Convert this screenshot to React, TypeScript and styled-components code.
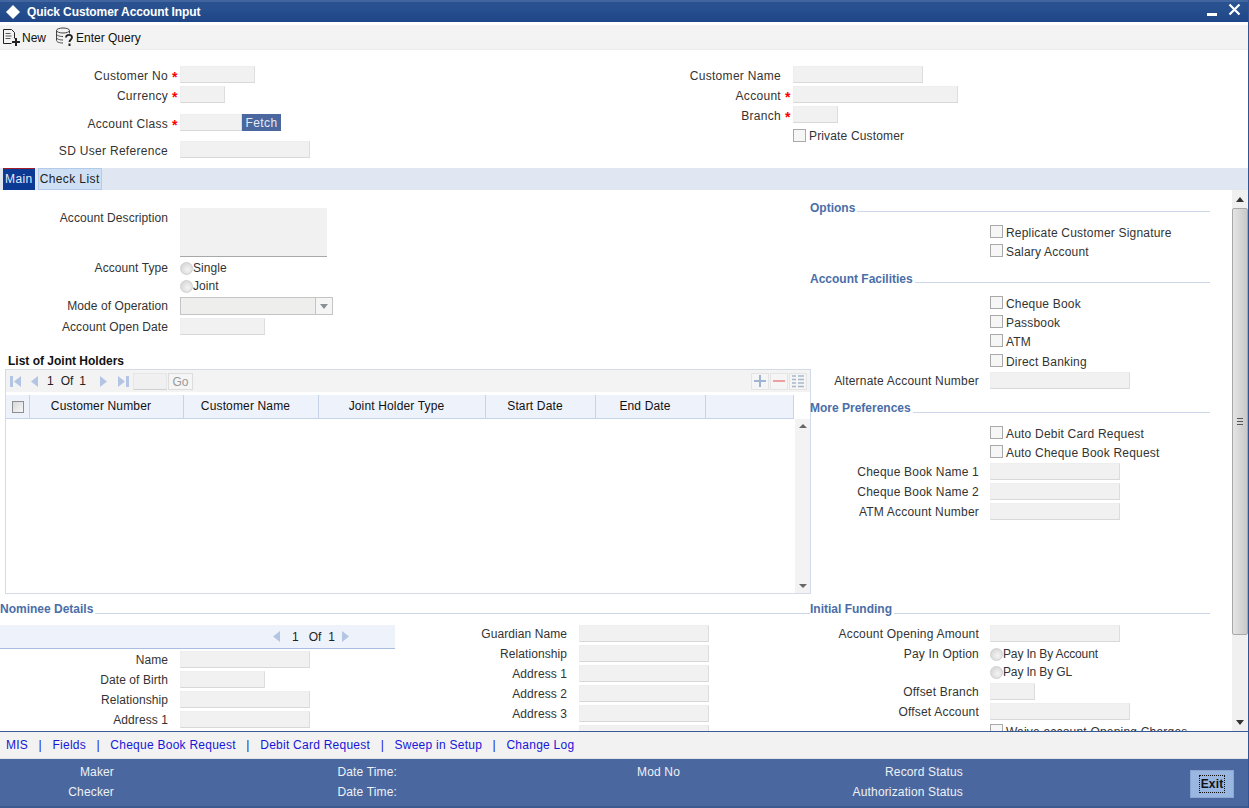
import React from 'react'
import styled, { createGlobalStyle } from 'styled-components'

const GlobalStyle = createGlobalStyle`
  html, body {
    margin: 0;
    padding: 0;
    background: #fff;
    overflow: hidden;
  }

  body {
    font-family: "Liberation Sans", Arial, sans-serif;
    font-size: 12px;
    color: #333;
  }
`

const RowField = ({
  label,
  width,
  labelWidth = 168,
  starWidth = 12,
  top = 3,
  required = false
}: {
  label: string
  width: number
  labelWidth?: number
  starWidth?: number
  top?: number
  required?: boolean
}) => (
  <Field $top={top}>
    <Label $width={labelWidth}>{label}</Label>
    <Star $width={starWidth}>{required ? '*' : ''}</Star>
    <TextInput $width={width} />
  </Field>
)

const SideField = ({ label, width, top }: { label: string; width: number; top?: number }) => (
  <RowField label={label} width={width} labelWidth={169} starWidth={11} top={top} />
)

const CheckRow = ({ label, top = 0 }: { label: string; top?: number }) => (
  <OptionRow $top={top}>
    <Box />
    <span>{label}</span>
  </OptionRow>
)

const SectionHeading = ({
  title,
  top,
  lineGap = 3
}: {
  title: string
  top: number
  lineGap?: number
}) => (
  <Heading $top={top}>
    <span>{title}</span>
    <HeadingLine $gap={lineGap} />
  </Heading>
)

const Arrow = ({ dir, left = 0 }: { dir: 'left' | 'right'; left?: number }) => (
  <PagerIcon $left={left}>
    <svg width="8" height="11" viewBox="0 0 8 11">
      <path d={dir === 'left' ? 'M7 0v11L0 5.500z' : 'M1 0v11l7-5.500z'} fill="#b4c5e3" />
    </svg>
  </PagerIcon>
)

const EdgeArrow = ({ dir, left = 0 }: { dir: 'left' | 'right'; left?: number }) => (
  <PagerIcon $left={left}>
    <svg width="11" height="11" viewBox="0 0 11 11">
      {dir === 'left' ? (
        <path d="M0 0h3v11H0zM11 0v11L4 5.500z" fill="#b4c5e3" />
      ) : (
        <path d="M8 0h3v11H8zM0 0v11l7-5.500z" fill="#b4c5e3" />
      )}
    </svg>
  </PagerIcon>
)

const App = () => {
  const columns = [
    { title: 'Customer Number', width: 154 },
    { title: 'Customer Name', width: 135 },
    { title: 'Joint Holder Type', width: 167 },
    { title: 'Start Date', width: 110 },
    { title: 'End Date', width: 110 }
  ]

  return (
    <Window>
      <GlobalStyle />

      <TitleBar>
        <svg width="16" height="16" viewBox="0 0 16 16">
          <path d="M8 1l7 7-7 7-7-7z" fill="#fff" />
        </svg>
        <TitleText>Quick Customer Account Input</TitleText>
        <WindowControls>
          <svg width="10" height="4" viewBox="0 0 10 4">
            <rect width="10" height="3" y="1" fill="#fff" />
          </svg>
          <svg width="13" height="13" viewBox="0 0 13 13">
            <path d="M1.500 1.500l10 10M11.500 1.500l-10 10" stroke="#fff" strokeWidth="2.200" />
          </svg>
        </WindowControls>
      </TitleBar>

      <Toolbar>
        <ToolButton>
          <svg width="20" height="20" viewBox="0 0 20 20" fill="none" stroke="#222">
            <path d="M2.500 2.500h8l3 3v6M2.500 2.500v14h8" />
            <path d="M4.500 6.500h5M4.500 9h6M4.500 11.500h5" stroke="#555" />
            <path d="M15 11v8M11 15h8" strokeWidth="2" />
          </svg>
          <span>New</span>
        </ToolButton>
        <ToolButton>
          <svg width="20" height="20" viewBox="0 0 20 20" fill="none" stroke="#444">
            <ellipse cx="8" cy="3.500" rx="6.500" ry="2.500" />
            <path d="M1.500 3.500v10c0 1.400 3 2.500 6.500 2.500M14.500 3.500v3M1.500 7c0 1.400 3 2.500 6.500 2.500M1.500 10.500C1.500 12 4.500 13 8 13" />
            <path d="M11 10.500c0-3.500 6-3.500 6 0 0 2-2.500 2-2.500 4.500" strokeWidth="1.800" stroke="#222" />
            <path d="M14.500 16.500v2.500" strokeWidth="2" stroke="#222" />
          </svg>
          <span>Enter Query</span>
        </ToolButton>
      </Toolbar>

      <HeaderForm>
        <HeaderColumn $width={500}>
          <RowField label="Customer No" width={75} required top={16} />
          <RowField label="Currency" width={45} required />
          <Field $top={11}>
            <Label $width={168}>Account Class</Label>
            <Star>*</Star>
            <TextInput $width={62} />
            <FetchButton>Fetch</FetchButton>
          </Field>
          <RowField label="SD User Reference" width={130} top={10} />
        </HeaderColumn>
        <HeaderColumn $width={600}>
          <RowField label="Customer Name" width={130} labelWidth={281} top={16} />
          <RowField label="Account" width={165} labelWidth={281} required />
          <RowField label="Branch" width={45} labelWidth={281} required />
          <HeaderCheck>
            <Box />
            <span>Private Customer</span>
          </HeaderCheck>
        </HeaderColumn>
      </HeaderForm>

      <TabBand>
        <Tab $active>Main</Tab>
        <Tab>Check List</Tab>
      </TabBand>

      <Body>
        <BodyContent>
          <LeftColumn>
            <Field $top={18} $height={49}>
              <TopLabel $width={168}>Account Description</TopLabel>
              <Star />
              <TextArea />
            </Field>
            <RadioField $top={2}>
              <Label $width={168}>Account Type</Label>
              <Star />
              <Radio />
              <span>Single</span>
            </RadioField>
            <RadioField>
              <Label $width={168} />
              <Star />
              <Radio />
              <span>Joint</span>
            </RadioField>
            <Field $top={2} $height={18}>
              <Label $width={168}>Mode of Operation</Label>
              <Star />
              <SelectBox>
                <SelectHandle>
                  <svg width="8" height="5" viewBox="0 0 8 5">
                    <path d="M0 0h8L4 5z" fill="#8a9099" />
                  </svg>
                </SelectHandle>
              </SelectBox>
            </Field>
            <RowField label="Account Open Date" width={85} />

            <GridTitle>List of Joint Holders</GridTitle>
            <GridPanel>
              <GridToolbar>
                <EdgeArrow dir="left" left={4} />
                <Arrow dir="left" left={10} />
                <PageText $left={8}>1</PageText>
                <PageText $left={7}>Of</PageText>
                <PageText $left={6}>1</PageText>
                <Arrow dir="right" left={13} />
                <EdgeArrow dir="right" left={11} />
                <GoInput />
                <GoButton>Go</GoButton>
                <GridActions>
                  <ActionButton>
                    <svg width="14" height="14" viewBox="0 0 14 14">
                      <path d="M7 1v12M1 7h12" stroke="#9fb3d3" strokeWidth="2" />
                    </svg>
                  </ActionButton>
                  <ActionButton>
                    <svg width="14" height="14" viewBox="0 0 14 14">
                      <path d="M1 7h12" stroke="#eda0a0" strokeWidth="2" />
                    </svg>
                  </ActionButton>
                  <ActionButton>
                    <svg width="14" height="14" viewBox="0 0 14 14">
                      <path
                        d="M1 2h4M7 2h6M1 5.500h4M7 5.500h6M1 9h4M7 9h6M1 12.500h4M7 12.500h6"
                        stroke="#a8b6cc"
                        strokeWidth="1.500"
                      />
                    </svg>
                  </ActionButton>
                </GridActions>
              </GridToolbar>
              <GridHeader>
                <CheckCell>
                  <GridCheck />
                </CheckCell>
                {columns.map(column => (
                  <HeaderCell key={column.title} $width={column.width}>
                    {column.title}
                  </HeaderCell>
                ))}
                <HeaderCell $width={88} />
              </GridHeader>
              <GridBody>
                <GridRows />
                <MiniScroll>
                  <ScrollArrow $up />
                  <ScrollArrow />
                </MiniScroll>
              </GridBody>
            </GridPanel>

            <SectionHeading title="Nominee Details" top={8} lineGap={2} />
            <NomineeWrap>
              <NomineeLeft>
                <PagerBand>
                  <Arrow dir="left" />
                  <PageText $left={11}>1</PageText>
                  <PageText $left={10}>Of</PageText>
                  <PageText $left={7}>1</PageText>
                  <Arrow dir="right" left={6} />
                </PagerBand>
                <RowField label="Name" width={130} top={2} />
                <RowField label="Date of Birth" width={85} />
                <RowField label="Relationship" width={130} />
                <RowField label="Address 1" width={130} />
              </NomineeLeft>
              <NomineeRight>
                <RowField label="Guardian Name" width={130} labelWidth={171} top={9} />
                <RowField label="Relationship" width={130} labelWidth={171} />
                <RowField label="Address 1" width={130} labelWidth={171} />
                <RowField label="Address 2" width={130} labelWidth={171} />
                <RowField label="Address 3" width={130} labelWidth={171} />
                <RowField label="" width={130} labelWidth={171} />
              </NomineeRight>
            </NomineeWrap>
          </LeftColumn>

          <RightColumn>
            <SectionHeading title="Options" top={11} />
            <CheckRow label="Replicate Customer Signature" top={8} />
            <CheckRow label="Salary Account" />

            <SectionHeading title="Account Facilities" top={11} />
            <CheckRow label="Cheque Book" top={8} />
            <CheckRow label="Passbook" />
            <CheckRow label="ATM" />
            <CheckRow label="Direct Banking" top={1} />
            <SideField label="Alternate Account Number" width={140} top={1} />

            <SectionHeading title="More Preferences" top={12} lineGap={2} />
            <CheckRow label="Auto Debit Card Request" top={9} />
            <CheckRow label="Auto Cheque Book Request" />
            <SideField label="Cheque Book Name 1" width={130} top={1} />
            <SideField label="Cheque Book Name 2" width={130} />
            <SideField label="ATM Account Number" width={130} />

            <SectionHeading title="Initial Funding" top={82} lineGap={2} />
            <SideField label="Account Opening Amount" width={130} top={9} />
            <Field $top={3} $height={18}>
              <Label $width={169}>Pay In Option</Label>
              <Star $width={11} />
              <Radio />
              <PayText>Pay In By Account</PayText>
            </Field>
            <Field $height={18}>
              <Label $width={169} />
              <Star $width={11} />
              <Radio />
              <PayText>Pay In By GL</PayText>
            </Field>
            <SideField label="Offset Branch" width={45} top={2} />
            <SideField label="Offset Account" width={140} />
            <CheckRow label="Waive account Opening Charges" top={2} />
          </RightColumn>
        </BodyContent>

        <MainScroll>
          <ScrollButton>
            <svg width="8" height="5" viewBox="0 0 8 5">
              <path d="M4 0l4 5H0z" fill="#333" />
            </svg>
          </ScrollButton>
          <ScrollThumb>
            <Grip />
          </ScrollThumb>
          <ScrollButton>
            <svg width="8" height="5" viewBox="0 0 8 5">
              <path d="M0 0h8L4 5z" fill="#333" />
            </svg>
          </ScrollButton>
        </MainScroll>
      </Body>

      <LinkBar>
        <LinkItem>MIS</LinkItem>
        <Separator>|</Separator>
        <LinkItem>Fields</LinkItem>
        <Separator>|</Separator>
        <LinkItem>Cheque Book Request</LinkItem>
        <Separator>|</Separator>
        <LinkItem>Debit Card Request</LinkItem>
        <Separator>|</Separator>
        <LinkItem>Sweep in Setup</LinkItem>
        <Separator>|</Separator>
        <LinkItem>Change Log</LinkItem>
      </LinkBar>

      <Footer>
        <FooterColumn $width={114}>
          <div>Maker</div>
          <div>Checker</div>
        </FooterColumn>
        <FooterColumn $width={283}>
          <div>Date Time:</div>
          <div>Date Time:</div>
        </FooterColumn>
        <FooterColumn $width={283}>
          <div>Mod No</div>
          <div />
        </FooterColumn>
        <FooterColumn $width={283}>
          <div>Record Status</div>
          <div>Authorization Status</div>
        </FooterColumn>
        <ExitButton>
          <ExitLabel>Exit</ExitLabel>
        </ExitButton>
      </Footer>
    </Window>
  )
}

const Window = styled.div`
  display: flex;
  flex-direction: column;
  width: 1249px;
  height: 808px;
  box-sizing: border-box;
  overflow: hidden;
  border-right: 1px solid #2f5597;
  letter-spacing: 0.15px;
`

const TitleBar = styled.div`
  display: flex;
  align-items: center;
  flex: 0 0 22px;
  padding: 0 7px 0 5px;
  background: linear-gradient(#2b5190, #27508f 35%, #1e4587);
  border-top: 2px solid #41659f;
  box-sizing: border-box;
  color: #fff;
`

const TitleText = styled.div`
  margin-left: 6px;
  font-weight: bold;
  letter-spacing: -0.1px;
`

const WindowControls = styled.div`
  display: flex;
  align-items: flex-start;
  gap: 11px;
  margin-left: auto;
  margin-top: -6px;

  svg:first-child {
    margin-top: 9px;
  }
`

const Toolbar = styled.div`
  display: flex;
  align-items: center;
  gap: 9px;
  flex: 0 0 25px;
  margin-top: 3px;
  padding-left: 1px;
  background: #f3f3f3;
  border-bottom: 1px solid #ececec;
  box-sizing: border-box;
  color: #111;
  letter-spacing: 0;
`

const ToolButton = styled.div`
  display: flex;
  align-items: center;
  gap: 1px;

  span {
    padding-top: 2px;
  }
`

const HeaderForm = styled.div`
  display: flex;
  flex: 0 0 118px;
`

const Field = styled.div<{ $top?: number; $height?: number }>`
  display: flex;
  align-items: center;
  height: ${props => props.$height ?? 17}px;
  margin-top: ${props => props.$top ?? 0}px;
  white-space: nowrap;
`

const Label = styled.div<{ $width: number }>`
  flex: 0 0 ${props => props.$width}px;
  text-align: right;
`

const HeaderColumn = styled.div<{ $width: number }>`
  width: ${props => props.$width}px;

  ${Label} {
    padding-top: 2px;
    letter-spacing: 0.3px;
  }
`

const TopLabel = styled(Label)`
  align-self: flex-start;
  margin-top: 3px;
`

const Star = styled.span<{ $width?: number }>`
  flex: 0 0 ${props => props.$width ?? 12}px;
  padding: 4px 0 0 4px;
  box-sizing: border-box;
  color: #f00;
  font-size: 14px;
  font-weight: bold;
  line-height: 12px;
  letter-spacing: 0;
`

const TextInput = styled.div<{ $width: number }>`
  width: ${props => props.$width}px;
  height: 17px;
  box-sizing: border-box;
  background: #f1f1f1;
  border: 1px solid #eeeeee;
  border-right-color: #dddddd;
  border-bottom-color: #d8d8d8;
`

const FetchButton = styled.div`
  width: 39px;
  height: 17px;
  background: #4a689f;
  color: #e4e9f2;
  line-height: 18px;
  text-align: center;
  letter-spacing: 0.4px;
`

const HeaderCheck = styled.div`
  display: flex;
  align-items: center;
  height: 14px;
  margin: 5px 0 0 293px;
  padding-top: 1px;
`

const Box = styled.span`
  flex: 0 0 13px;
  width: 13px;
  height: 13px;
  margin: 0 3px 2px 0;
  box-sizing: border-box;
  background: #f6f6f6;
  border: 1px solid #a9a9a9;
`

const TabBand = styled.div`
  display: flex;
  flex: 0 0 22px;
  gap: 3px;
  padding-left: 3px;
  background: #e0e7f3;
`

const Tab = styled.div<{ $active?: boolean }>`
  padding: 1px 1px 0;
  border: 1px solid ${props => (props.$active ? '#0a3a94' : '#b3cbe9')};
  border-top: 1px solid ${props => (props.$active ? '#a31e2b' : '#b3cbe9')};
  background: ${props => (props.$active ? '#0a3a94' : '#cfe0f5')};
  color: ${props => (props.$active ? '#e4ecf7' : '#222')};
  line-height: 19px;
  letter-spacing: 0.4px;
`

const Body = styled.div`
  display: flex;
  flex: 0 0 541px;
  overflow: hidden;
`

const BodyContent = styled.div`
  display: flex;
  flex: 1;
  overflow: hidden;
`

const LeftColumn = styled.div`
  flex: 0 0 810px;
  min-width: 0;
  letter-spacing: 0.08px;
`

const RightColumn = styled.div`
  flex: 0 0 400px;
  letter-spacing: 0.2px;
`

const RadioField = styled(Field)`
  height: 18px;
`

const Radio = styled.span`
  flex: 0 0 13px;
  width: 13px;
  height: 13px;
  box-sizing: border-box;
  border-radius: 50%;
  background: radial-gradient(circle at 60% 60%, #f4f4f4, #cfcfcf);
  border: 1px solid #d0d0d0;
`

const PayText = styled.span`
  letter-spacing: -0.15px;
`

const OptionRow = styled.div<{ $top: number }>`
  display: flex;
  align-items: center;
  height: 19px;
  margin-top: ${props => props.$top}px;
  padding-left: 180px;
  white-space: nowrap;
`

const TextArea = styled.div`
  width: 147px;
  height: 49px;
  box-sizing: border-box;
  background: #f1f1f1;
  border-bottom: 1px solid #a8a8a8;
`

const SelectBox = styled.div`
  position: relative;
  width: 153px;
  height: 18px;
  box-sizing: border-box;
  background: #eeeeec;
  border: 1px solid #c4c4c4;
`

const SelectHandle = styled.div`
  position: absolute;
  top: 0;
  right: 0;
  bottom: 0;
  display: flex;
  align-items: center;
  justify-content: center;
  width: 16px;
  background: #f5f5f5;
  border-left: 1px solid #c4c4c4;
`

const GridTitle = styled.div`
  margin: 19px 0 1px 8px;
  color: #111;
  font-weight: bold;
  line-height: 14px;
  letter-spacing: 0;
`

const GridPanel = styled.div`
  display: flex;
  flex-direction: column;
  width: 806px;
  height: 225px;
  margin-left: 5px;
  box-sizing: border-box;
  border: 1px solid #d3dbe8;
`

const GridToolbar = styled.div`
  display: flex;
  flex: 0 0 22px;
  align-items: center;
  background: #f3f3f3;
  padding-right: 3px;
`

const PagerIcon = styled.span<{ $left: number }>`
  display: flex;
  margin-left: ${props => props.$left}px;
`

const PageText = styled.span<{ $left: number }>`
  margin-left: ${props => props.$left}px;
  color: #222;
  letter-spacing: 0;
`

const GoInput = styled.span`
  width: 34px;
  height: 17px;
  margin-left: 4px;
  box-sizing: border-box;
  background: #f0f0f0;
  border: 1px solid #e6e6e6;
  border-bottom-color: #d0d0d0;
`

const GoButton = styled.span`
  width: 25px;
  height: 17px;
  margin-left: 1px;
  box-sizing: border-box;
  background: #f5f5f5;
  border: 1px solid #dcdcdc;
  color: #999;
  line-height: 16px;
  text-align: center;
`

const GridActions = styled.div`
  display: flex;
  gap: 1px;
  margin-left: auto;
`

const ActionButton = styled.span`
  display: flex;
  align-items: center;
  justify-content: center;
  width: 18px;
  height: 17px;
  background: #f5f5f5;
  border: 1px solid #e4e4e4;
  box-sizing: border-box;
`

const GridHeader = styled.div`
  display: flex;
  flex: 0 0 22px;
  margin: 3px 16px 0 0;
  box-sizing: border-box;
  background: #eef2fb;
  border-bottom: 1px solid #c6d3e8;
  color: #111;
  letter-spacing: 0.15px;
`

const CheckCell = styled.div`
  display: flex;
  align-items: center;
  justify-content: center;
  width: 23px;
  border-right: 1px solid #c6d3e8;
`

const GridCheck = styled.span`
  width: 12px;
  height: 12px;
  box-sizing: border-box;
  background: linear-gradient(135deg, #d8d8d8, #f8f8f8);
  border: 1px solid #8e8e8e;
`

const HeaderCell = styled.div<{ $width: number }>`
  width: ${props => props.$width}px;
  padding-right: 11px;
  box-sizing: border-box;
  border-right: 1px solid #c6d3e8;
  line-height: 23px;
  text-align: center;
`

const GridBody = styled.div`
  display: flex;
  flex: 1;
  min-height: 0;
`

const GridRows = styled.div`
  flex: 1;
`

const MiniScroll = styled.div`
  display: flex;
  flex: 0 0 15px;
  flex-direction: column;
  justify-content: space-between;
  background: #f3f3f3;
`

const ScrollArrow = styled.div<{ $up?: boolean }>`
  width: 0;
  height: 0;
  margin: 5px auto;
  border-left: 4px solid transparent;
  border-right: 4px solid transparent;
  border-${props => (props.$up ? 'bottom' : 'top')}: 4px solid #666;
`

const Heading = styled.div<{ $top: number }>`
  display: flex;
  align-items: flex-end;
  height: 14px;
  margin-top: ${props => props.$top}px;
  color: #4a6ea8;
  font-weight: bold;
  line-height: 14px;
  letter-spacing: 0;
`

const HeadingLine = styled.span<{ $gap: number }>`
  flex: 1;
  margin: 0 0 ${props => props.$gap}px 2px;
  border-bottom: 1px solid #cbd6e8;
`

const NomineeWrap = styled.div`
  display: flex;
`

const NomineeLeft = styled.div`
  flex: 0 0 396px;
`

const NomineeRight = styled.div`
  flex: 1;
`

const PagerBand = styled.div`
  display: flex;
  align-items: center;
  justify-content: flex-end;
  width: 395px;
  height: 24px;
  margin-top: 9px;
  padding-right: 46px;
  box-sizing: border-box;
  background: #eef2fb;
  border-bottom: 1px solid #a9bddf;
`

const MainScroll = styled.div`
  display: flex;
  flex: 0 0 16px;
  flex-direction: column;
  background: #f0f0f0;
`

const ScrollButton = styled.div`
  display: flex;
  flex: 0 0 18px;
  align-items: center;
  justify-content: center;
`

const ScrollThumb = styled.div`
  display: flex;
  flex: 1;
  align-items: center;
  justify-content: center;
  margin-bottom: 78px;
  background: linear-gradient(90deg, #e4e4e4, #c9c9c9);
  border: 1px solid #a8a8a8;
  border-radius: 2px;
`

const Grip = styled.span`
  width: 6px;
  height: 7px;
  background: repeating-linear-gradient(#555 0 1px, transparent 1px 3px);
`

const LinkBar = styled.div`
  display: flex;
  flex: 0 0 27px;
  align-items: center;
  gap: 10.5px;
  padding-left: 6px;
  box-sizing: border-box;
  background: #f2f2f2;
  border-top: 1px solid #3b5a98;
  letter-spacing: 0.25px;
`

const LinkItem = styled.span`
  color: #1717d8;
`

const Separator = styled.span`
  color: #1717d8;
`

const Footer = styled.div`
  display: flex;
  flex: 0 0 50px;
  align-items: center;
  padding-bottom: 2px;
  box-sizing: border-box;
  background: #4a689f;
  border-top: 1px solid #dfe3ea;
  border-bottom: 2px solid #3d5a90;
  color: #eef1f6;
`

const FooterColumn = styled.div<{ $width: number }>`
  flex: 0 0 ${props => props.$width}px;
  line-height: 20px;
  text-align: right;

  > div {
    height: 20px;
  }
`

const ExitButton = styled.div`
  display: flex;
  align-items: center;
  justify-content: center;
  width: 44px;
  height: 28px;
  margin: 4px 14px 0 auto;
  background: #9ab7e2;
  border: 1px solid #8aa5d0;
  box-sizing: border-box;
`

const ExitLabel = styled.span`
  padding: 0 1px;
  outline: 1px dotted #111;
  color: #111;
  font-weight: bold;
  line-height: 16px;
`

export default App
